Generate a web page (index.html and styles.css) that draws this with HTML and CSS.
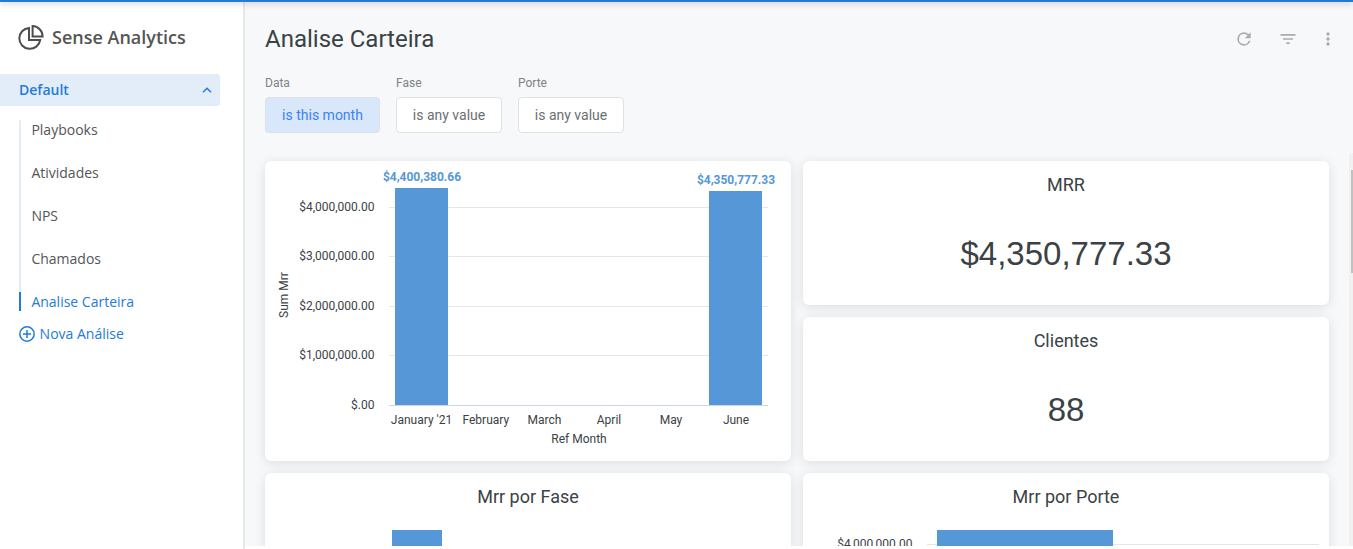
FILE: index.html
```
<!DOCTYPE html>
<html lang="pt-BR">
<head>
  <meta charset="UTF-8" />
  <meta name="viewport" content="width=device-width, initial-scale=1" />
  <title>Sense Analytics | Analise Carteira</title>
  <link rel="stylesheet" href="styles.css">
</head>
<body>
  <div class="top-line"></div>

  <div class="app">
    <aside class="sidebar">
      <div class="brand">
        <svg width="26" height="26" viewBox="0 0 26 26" fill="none" stroke="#4d4d4d" stroke-width="2">
          <path d="M11 2.9A10.5 10.5 0 1 0 22.2 15H11z" />
          <path d="M14.6 1.1V11.4H24.6A10.3 10.3 0 0 0 14.6 1.1z" />
        </svg>
        <span>Sense Analytics</span>
      </div>

      <div class="group">
        <span>Default</span>
        <svg width="10" height="6" viewBox="0 0 10 6" fill="none" stroke="#237bd8" stroke-width="1.5">
          <path d="M1 5.2L5 1.2L9 5.2" />
        </svg>
      </div>

      <ul class="nav">
        <li>Playbooks</li>
        <li>Atividades</li>
        <li>NPS</li>
        <li>Chamados</li>
        <li class="active">Analise Carteira</li>
      </ul>

      <div class="new-item">
        <svg width="16" height="16" viewBox="0 0 16 16" fill="none" stroke="#237bd8" stroke-width="1.5">
          <circle cx="8" cy="8" r="7.2" />
          <path d="M8 4v8M4 8h8" />
        </svg>
        <span>Nova Análise</span>
      </div>
    </aside>

    <main class="content">
      <header class="header">
        <h1>Analise Carteira</h1>
        <div class="actions">
          <svg width="20" height="20" viewBox="0 0 24 24" fill="#a9abad">
            <path d="M17.65 6.35A7.95 7.95 0 0 0 12 4a8 8 0 1 0 7.73 10h-2.08A6 6 0 1 1 12 6c1.66 0 3.14.69 4.22 1.78L13 11h7V4l-2.35 2.35z" />
          </svg>
          <svg width="20" height="20" viewBox="0 0 24 24" fill="#a9abad">
            <path d="M10 18h4v-2h-4v2zM3 6v2h18V6H3zm3 7h12v-2H6v2z" />
          </svg>
          <svg width="20" height="20" viewBox="0 0 24 24" fill="#a9abad">
            <circle cx="12" cy="6" r="2" />
            <circle cx="12" cy="12" r="2" />
            <circle cx="12" cy="18" r="2" />
          </svg>
        </div>
      </header>

      <div class="filters">
        <div class="filter">
          <label>Data</label>
          <button class="selected">is this month</button>
        </div>
        <div class="filter">
          <label>Fase</label>
          <button>is any value</button>
        </div>
        <div class="filter">
          <label>Porte</label>
          <button>is any value</button>
        </div>
      </div>

      <div class="board">
        <div class="dashboard">
          <section class="card tall">
            <svg class="chart" width="526" height="300" viewBox="0 0 526 300">
              <g class="grid-lines">
                <path d="M124 46.5H503M124 95.5H503M124 145.5H503M124 194.5H503" />
                <path class="axis" d="M124 244.5H503" />
              </g>
              <g class="bars">
                <rect x="130" y="27" width="53" height="217" />
                <rect x="444" y="30" width="53" height="214" />
              </g>
              <g class="values">
                <text x="157" y="20">$4,400,380.66</text>
                <text x="471" y="23">$4,350,777.33</text>
              </g>
              <g class="y-labels">
                <text x="109.5" y="50">$4,000,000.00</text>
                <text x="109.5" y="99">$3,000,000.00</text>
                <text x="109.5" y="149">$2,000,000.00</text>
                <text x="109.5" y="198">$1,000,000.00</text>
                <text x="109.5" y="248">$.00</text>
              </g>
              <g class="x-labels">
                <text x="156.5" y="263">January '21</text>
                <text x="220.8" y="263">February</text>
                <text x="279.5" y="263">March</text>
                <text x="344" y="263">April</text>
                <text x="406" y="263">May</text>
                <text x="471" y="263">June</text>
                <text x="314" y="282">Ref Month</text>
                <text transform="translate(23 134) rotate(-90)">Sum Mrr</text>
              </g>
            </svg>
          </section>

          <section class="card">
            <h2>MRR</h2>
            <p class="big">$4,350,777.33</p>
          </section>

          <section class="card">
            <h2>Clientes</h2>
            <p class="big">88</p>
          </section>

          <section class="card tall">
            <h2>Mrr por Fase</h2>
            <svg class="chart" width="526" height="200" viewBox="0 0 526 200">
              <g class="bars">
                <rect x="127" y="9" width="50" height="191" />
              </g>
            </svg>
          </section>

          <section class="card tall">
            <h2>Mrr por Porte</h2>
            <svg class="chart" width="526" height="200" viewBox="0 0 526 200">
              <path class="grid-lines" d="M124 23.5H516" />
              <g class="bars">
                <rect x="134" y="9" width="176" height="191" />
              </g>
              <g class="y-labels">
                <text x="109.5" y="27">$4,000,000.00</text>
              </g>
            </svg>
          </section>
        </div>
        <div class="scrollbar"><div class="thumb"></div></div>
      </div>
    </main>
  </div>
</body>
</html>
```
FILE: styles.css
```
* {
  box-sizing: border-box;
}
body {
  margin: 0;
  height: 100vh;
  overflow: hidden;
  display: flex;
  flex-direction: column;
  font-family: Roboto, sans-serif;
  color: #3a4245;
  background: white;
}
.top-line {
  height: 2px;
  flex-shrink: 0;
  background: #237bd8;
  box-shadow: 0 1px 6px rgba(0,0,0,0.35);
  z-index: 1;
}
.app {
  display: flex;
  flex: 1;
  min-height: 0;
}

/* sidebar */
.sidebar {
  width: 245px;
  flex-shrink: 0;
  padding-top: 21px;
  background: white;
  border-right: 2px solid #e6e8e9;
  font-family: "Open Sans", sans-serif;
  font-size: 14px;
  color: #555;
}
.brand {
  display: flex;
  align-items: center;
  gap: 8px;
  height: 28px;
  padding-left: 18px;
  font-size: 18px;
  font-weight: 600;
}
.brand svg {
  margin-top: 2px;
}
.group {
  display: flex;
  align-items: center;
  justify-content: space-between;
  width: 220px;
  height: 32px;
  margin-top: 23px;
  padding: 0 8px 2px 19px;
  background: #e3edfa;
  border-radius: 0 3px 3px 0;
  color: #237bd8;
  font-weight: 600;
}
.group svg {
  margin-top: 2px;
}
.nav {
  list-style: none;
  display: flex;
  flex-direction: column;
  gap: 24px;
  margin: 14px 0 0 19px;
  padding: 0;
  background: linear-gradient(#e3edfa, #e3edfa) no-repeat 0 0 / 2px 100%;
}
.nav li {
  height: 19px;
  line-height: 19px;
  padding-left: 10.4px;
  border-left: 2px solid transparent;
}
.nav .active {
  border-left-color: #237bd8;
  color: #237bd8;
}
.new-item {
  display: flex;
  align-items: center;
  gap: 4.6px;
  height: 20px;
  margin: 13px 0 0 19px;
  color: #237bd8;
}
.new-item span {
  padding-bottom: 2px;
}

/* content */
.content {
  flex: 1;
  min-width: 0;
  display: flex;
  flex-direction: column;
  margin-bottom: 3px;
  background: #f6f8fa;
}
.header {
  display: flex;
  align-items: center;
  justify-content: space-between;
  height: 74px;
  padding: 0 15px 0 20px;
}
h1 {
  margin: 0;
  font-size: 24px;
  font-weight: 400;
}
.actions {
  display: flex;
  gap: 24px;
}
.actions svg:last-child {
  margin-left: -4px;
}
.filters {
  display: flex;
  gap: 16px;
  padding-left: 20px;
}
.filter {
  display: flex;
  flex-direction: column;
}
.filter label {
  height: 21px;
  line-height: 15px;
  font-size: 12px;
  color: #7e8386;
}
.filter button {
  height: 36px;
  width: 106px;
  padding: 0;
  border: 1px solid #dfe1e3;
  border-radius: 4px;
  background: white;
  font-family: Roboto, sans-serif;
  font-size: 14px;
  color: #6b6f72;
}
.filter .selected {
  width: 115px;
  background: #d9e7fa;
  color: #3b82f6;
}
.board {
  display: flex;
  justify-content: space-between;
  flex: 1;
  min-height: 0;
  margin-top: 20px;
  overflow: hidden;
}
.dashboard {
  display: grid;
  grid-template-columns: 526px 526px;
  grid-auto-rows: 144px;
  gap: 12px;
  padding: 8px 20px;
}
.card {
  overflow: hidden;
  background: white;
  border-radius: 6px;
  box-shadow: 0 2px 12px rgba(0,0,0,0.11);
  text-align: center;
}
.card.tall {
  grid-row: span 2;
}
h2 {
  margin: 0;
  height: 48px;
  line-height: 48px;
  font-size: 18px;
  font-weight: 400;
}
.big {
  margin: 24px 0 0;
  font-family: "Liberation Sans", Arial, sans-serif;
  font-size: 33px;
  line-height: 42px;
}
.scrollbar {
  width: 4px;
  padding: 17px 0 0 2px;
  background: #f1f1f1;
}
.thumb {
  height: 103px;
  background: #c1c1c1;
}

/* charts */
.chart {
  display: block;
  font-size: 12px;
}
.chart text {
  fill: #3a4245;
}
.grid-lines {
  stroke: #e4e6e7;
}
.axis {
  stroke: #ccd6eb;
}
.bars {
  fill: #5697d8;
}
.chart .values text {
  fill: #5697d8;
  font-weight: 700;
  text-anchor: middle;
}
.y-labels {
  text-anchor: end;
}
.x-labels {
  text-anchor: middle;
}
```
